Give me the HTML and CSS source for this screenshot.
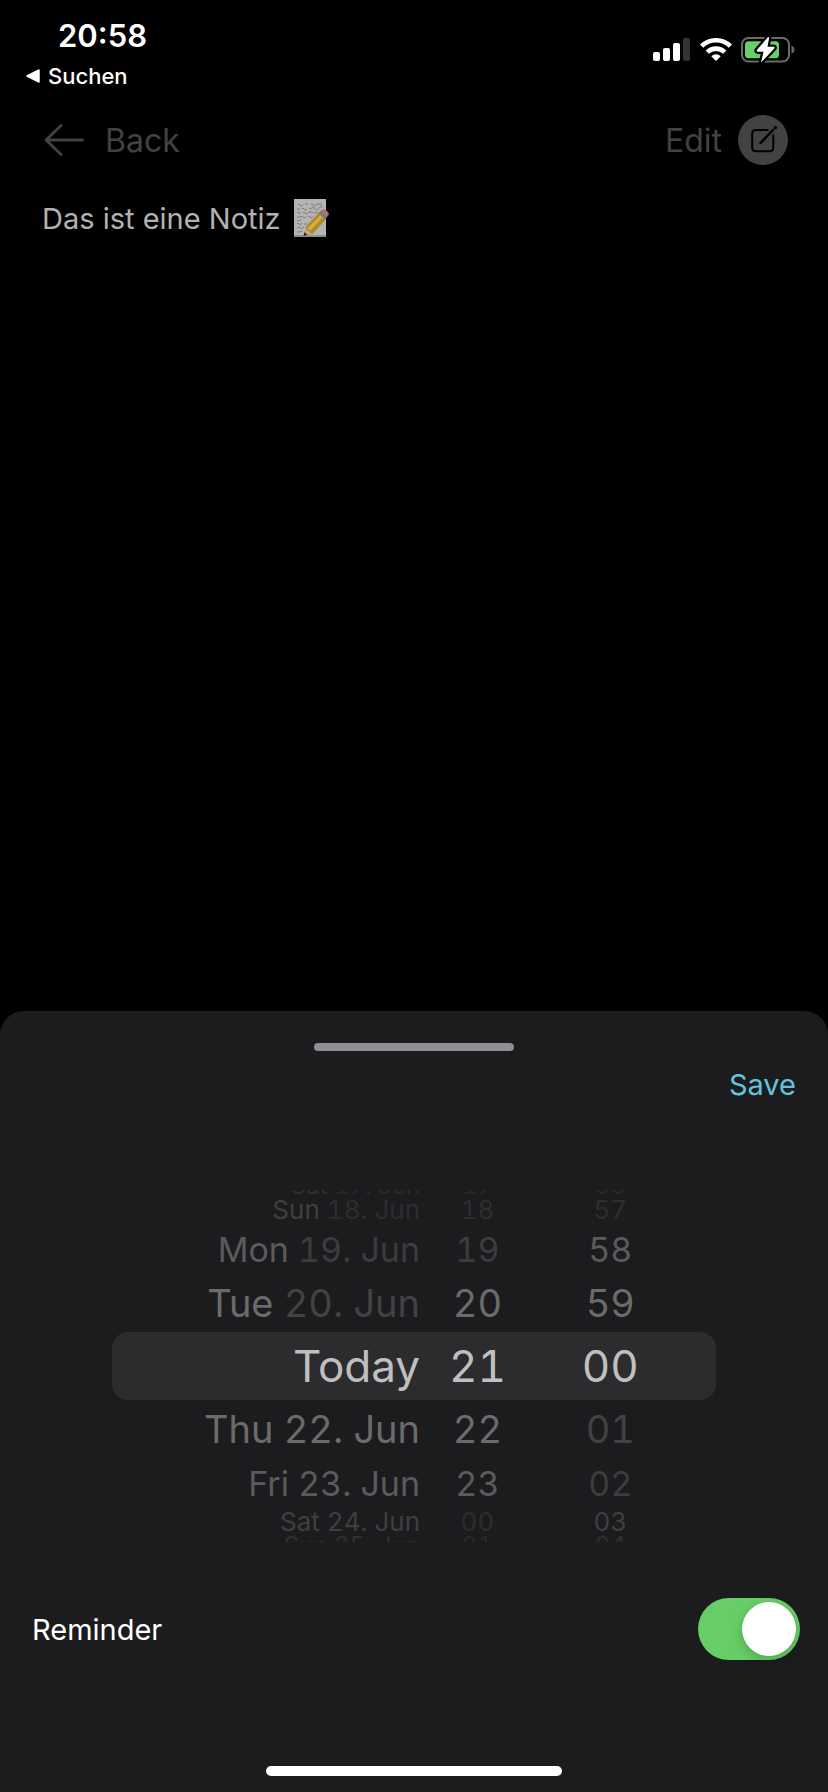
FILE: index.html
```
<!DOCTYPE html>
<html lang="en">
<head>
    <meta charset="UTF-8">
    <meta name="viewport" content="width=device-width, initial-scale=1.0">
    <title>Note</title>
    <link rel="stylesheet" href="styles.css">
</head>
<body>
    <div class="status-bar">
        <div class="status-left">
            <span class="clock">20:58</span>
            <a class="back-to-app" href="#">
                <svg width="14" height="14" viewBox="0 0 14 14"><path d="M1 7L13 1V13Z" fill="#fff" stroke="#fff" stroke-width="1.5" stroke-linejoin="round"/></svg>
                Suchen
            </a>
        </div>
        <div class="status-icons">
            <!-- signal -->
            <svg width="38" height="24" viewBox="0 0 38 24">
                <g fill="#fff">
                    <rect x="0" y="14" width="7" height="9" rx="2"/>
                    <rect x="10" y="10" width="7" height="13" rx="2"/>
                    <rect x="20" y="5" width="7" height="18" rx="2"/>
                </g>
                <rect x="30" y="0" width="7" height="23" rx="2" fill="#333"/>
            </svg>
            <!-- wifi -->
            <svg width="32" height="24" viewBox="0 0 32 24">
                <g fill="none" stroke="#fff" stroke-width="4.6">
                    <path d="M1.600 8.200A20.500 20.500 0 0 1 30.400 8.200"/>
                    <path d="M7.200 14.200A12.500 12.500 0 0 1 24.800 14.200"/>
                </g>
                <path d="M16 23L11.300 18.200A6.600 6.600 0 0 1 20.700 18.200Z" fill="#fff"/>
            </svg>
            <!-- battery, charging -->
            <svg width="54" height="28" viewBox="0 0 54 28">
                <rect x="1" y="2" width="47" height="23.500" rx="6.500" fill="none" stroke="#6b6b6b" stroke-width="2"/>
                <path d="M50.500 9.500Q53.500 11 53.500 13.700T50.500 18Z" fill="#6b6b6b"/>
                <rect x="4" y="5.300" width="34" height="17" rx="3.500" fill="#68ce6a"/>
                <path d="M27 1L15.800 14Q15 15.500 16.800 15.700H22.500L20 26.500L33.300 12.500Q34.200 11 32.500 10.800H26.500L28.200 1.500Z" fill="#fff" stroke="#000" stroke-width="4.500" stroke-linejoin="round" paint-order="stroke"/>
            </svg>
        </div>
    </div>

    <nav class="nav">
        <button class="nav-btn back" type="button">
            <svg width="41" height="34" viewBox="0 0 41 34" fill="none" stroke="#424242" stroke-width="2.800" stroke-linecap="round" stroke-linejoin="round"><path d="M38.500 17H2M17 2.500L2 17L17 31.500"/></svg>
            Back
        </button>
        <button class="nav-btn edit" type="button">
            Edit
            <svg width="50" height="50" viewBox="0 0 50 50">
                <circle cx="25" cy="25" r="25" fill="#424242"/>
                <g fill="none" stroke="#000" stroke-width="2">
                    <path d="M30.500 15H18Q14.200 15 14.200 18.800V32.500Q14.200 36.200 18 36.200H31.500Q35.300 36.200 35.300 32.500V19.500"/>
                    <path d="M22.500 28L34.800 15.200" stroke-width="2.500" stroke-linecap="round"/>
                </g>
                <circle cx="37.300" cy="12.800" r="1.800"/>
            </svg>
        </button>
    </nav>

    <main class="note">
        <span>Das ist eine Notiz</span>
        <svg width="36" height="40" viewBox="0 0 36 40">
            <rect x="1" y="1" width="32" height="38" fill="#b4b4b3"/>
            <rect x="1" y="37" width="32" height="2" fill="#8f8f8f"/>
            <g fill="none" stroke="#7d7d7d" stroke-width="1">
                <path d="M5 7q1-2 2 0t3 0M12 6h3M18 7q1-2 2 0t3 0t3-1t3 0"/>
                <path d="M4 11h3M9 11q1-2 2 0t3 0M16 10q1 2 3 0t3 1t4-1t3 0"/>
                <path d="M4 15q1-2 2 0h2M10 15q1-2 2 0t3 0t4-1t3 1t3-1"/>
                <path d="M4 19h4q1-2 2 0t3 0M15 19q1-2 2 0t3-1"/>
                <path d="M4 22q1 2 4 0M4 26q1-2 2 0t3-1M11 26h3M4 30q2-2 3 0t4-1M4 34h3q1-2 2 0"/>
            </g>
            <path d="M10.500 38L12.500 29L19.500 36Z" fill="#c9a77c"/>
            <path d="M10.500 38L11.500 34L14.500 37Z" fill="#2c2c2e"/>
            <path d="M12.500 29L26 14.500L33 21L19.500 36Q17 35.500 16.500 33.500Q13.500 32.500 12.500 29Z" fill="#b18a25"/>
            <path d="M14.500 30L28 16.500L30.500 18.500L17 33Z" fill="#cfae42"/>
            <path d="M25.500 15L28 12.500L34.500 18.500L32 21.500Z" fill="#777c82"/>
            <path d="M27.500 13L29.500 11.500Q32 10.500 34.500 13.500T35 17.500L33.500 19Z" fill="#b06f73"/>
        </svg>
    </main>

    <section class="sheet">
        <div class="handle"></div>
        <div class="sheet-actions">
            <button class="save" type="button">Save</button>
        </div>

        <div class="picker">
            <ul class="wheel wheel-date">
                <li class="edge top"><span>Sat <i>17. Jun</i></span></li>
                <li class="far"><span>Sun <i>18. Jun</i></span></li>
                <li class="mid"><span>Mon <i>19. Jun</i></span></li>
                <li class="near"><span>Tue <i>20. Jun</i></span></li>
                <li class="selected">Today</li>
                <li class="near">Thu 22. Jun</li>
                <li class="mid">Fri 23. Jun</li>
                <li class="far">Sat 24. Jun</li>
                <li class="edge">Sun 25. Jun</li>
            </ul>
            <ul class="wheel wheel-hour">
                <li class="edge top"><i>17</i></li>
                <li class="far"><i>18</i></li>
                <li class="mid"><i>19</i></li>
                <li class="near">20</li>
                <li class="selected">21</li>
                <li class="near">22</li>
                <li class="mid">23</li>
                <li class="far"><i>00</i></li>
                <li class="edge"><i>01</i></li>
            </ul>
            <ul class="wheel wheel-minute">
                <li class="edge top"><i>56</i></li>
                <li class="far"><i>57</i></li>
                <li class="mid">58</li>
                <li class="near">59</li>
                <li class="selected">00</li>
                <li class="near"><i>01</i></li>
                <li class="mid"><i>02</i></li>
                <li class="far">03</li>
                <li class="edge">04</li>
            </ul>
        </div>

        <div class="reminder">
            <label for="reminder">Reminder</label>
            <input class="switch" type="checkbox" id="reminder" checked>
        </div>
        <div class="home-bar"></div>
    </section>
</body>
</html>
```
FILE: styles.css
```
* {
    box-sizing: border-box;
}
body {
    margin: 0;
    min-height: 100vh;
    display: flex;
    flex-direction: column;
    background-color: #000;
    color: #fff;
    font-family: Inter, "Liberation Sans", sans-serif;
    font-size: 29px;
}
button {
    padding: 0;
    border: none;
    background: none;
    font-family: inherit;
    cursor: pointer;
}
svg {
    display: block;
    flex-shrink: 0;
}

/* status bar */
.status-bar {
    display: flex;
    justify-content: space-between;
    padding: 16px 33px 0 26px;
    height: 96px;
}
.status-left {
    display: flex;
    flex-direction: column;
}
.clock {
    padding-left: 32px;
    font-size: 31px;
    font-weight: 600;
    line-height: 40px;
}
.back-to-app {
    display: flex;
    align-items: center;
    gap: 8px;
    color: #fff;
    font-size: 22px;
    font-weight: 500;
    line-height: 40px;
    text-decoration: none;
}
.status-icons {
    display: flex;
    align-items: center;
    gap: 9px;
    height: 68px;
}

/* navigation */
.nav {
    display: flex;
    justify-content: space-between;
    align-items: center;
    height: 88px;
    padding: 0 40px 0 44px;
}
.nav-btn {
    display: flex;
    align-items: center;
    color: #424242;
    font-size: 32px;
}
.back {
    gap: 20px;
}
.edit {
    gap: 16px;
}
.note {
    display: flex;
    align-items: center;
    gap: 12px;
    height: 68px;
    padding: 0 42px;
    color: #b2b2b2;
}

/* bottom sheet */
.sheet {
    display: flex;
    flex-direction: column;
    margin-top: auto;
    padding: 32px 0 16px;
    border-radius: 24px 24px 0 0;
    background-color: #1c1c1e;
}
.handle {
    align-self: center;
    width: 200px;
    height: 8px;
    border-radius: 4px;
    background-color: #8e8e93;
}
.sheet-actions {
    display: flex;
    justify-content: flex-end;
    padding: 12px 32px 0;
    margin-bottom: 83px;
}
.save {
    color: #64c4dd;
    font-size: 29px;
    line-height: 44px;
}

/* date picker */
.picker {
    position: relative;
    display: flex;
    margin: 0 112px;
}
/* highlight behind the selected row */
.picker::before {
    content: "";
    position: absolute;
    top: 142px;
    left: 0;
    right: 0;
    height: 68px;
    border-radius: 16px;
    background-color: #2c2c2e;
}
.wheel {
    position: relative;
    margin: 0;
    padding: 0;
    list-style: none;
    font-variant-numeric: tabular-nums;
    white-space: nowrap;
}
.wheel-date {
    width: 51%;
}
.wheel-hour {
    width: 19%;
}
.wheel-minute {
    width: 25%;
}
.wheel li {
    display: flex;
    justify-content: center;
    align-items: center;
}
.wheel-date li {
    justify-content: flex-end;
}
.wheel i {
    font-style: normal;
}
.wheel .selected {
    height: 68px;
    font-size: 44px;
    color: #bfbfc0;
}
.near {
    height: 58px;
    font-size: 38px;
    color: #6b6b6c;
}
.near i {
    color: #424244;
}
.mid {
    height: 50px;
    font-size: 34px;
    color: #5b5b5d;
}
.mid i {
    color: #3c3c3e;
}
.wheel .far {
    height: 28px;
    font-size: 26px;
    line-height: 28px;
    color: #3f3f41;
}
.wheel .far i {
    color: #2d2d2f;
}
/* outermost rows turn away, only a sliver of them shows */
.wheel .edge {
    align-items: flex-start;
    height: 6px;
    overflow: hidden;
    font-size: 24px;
    line-height: 20px;
    color: #303032;
}
.wheel .edge.top {
    align-items: flex-end;
}
.edge i {
    color: #29292b;
}

/* reminder */
.reminder {
    display: flex;
    justify-content: space-between;
    align-items: center;
    padding: 56px 28px 0 32px;
    margin-bottom: 106px;
}
.switch {
    appearance: none;
    display: flex;
    width: 102px;
    height: 62px;
    margin: 0;
    padding: 4px;
    border-radius: 31px;
    background-color: #39393d;
}
.switch::before {
    content: "";
    width: 54px;
    height: 54px;
    border-radius: 50%;
    background-color: #fff;
    box-shadow: 0 4px 12px rgba(0, 0, 0, 0.2);
}
.switch:checked {
    justify-content: flex-end;
    background-color: #67ce67;
}
.home-bar {
    align-self: center;
    width: 296px;
    height: 10px;
    border-radius: 5px;
    background-color: #fff;
}
```
